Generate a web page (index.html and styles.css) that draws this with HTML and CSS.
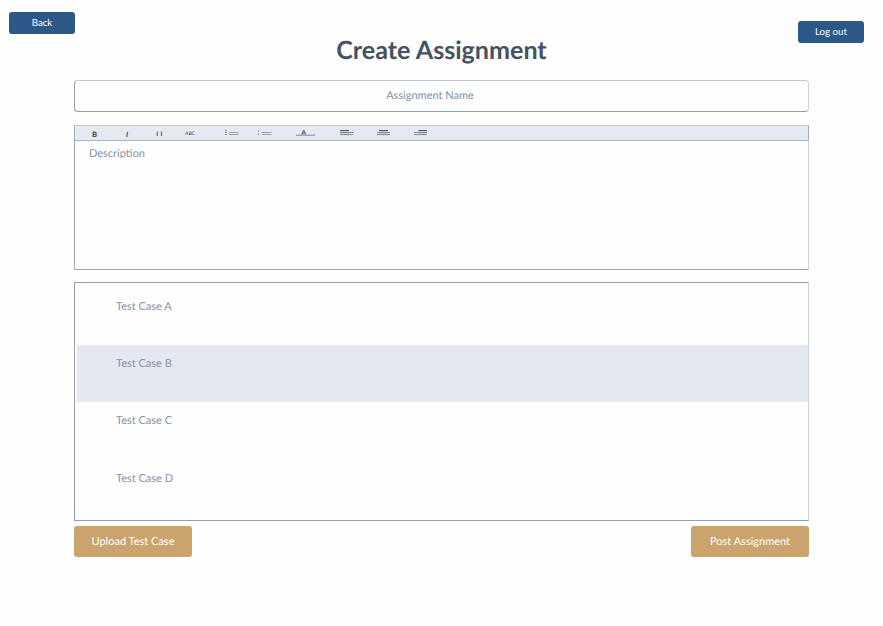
FILE: index.html
```html
<!DOCTYPE html>
<html lang="en">
<head>
<meta charset="utf-8">
<title>Create Assignment</title>
<link rel="stylesheet" href="styles.css">
</head>
<body>
<header class="top">
  <button class="nav-btn back">Back</button>
  <h1>Create Assignment</h1>
  <button class="nav-btn logout">Log out</button>
</header>
<main>
  <div class="name-field"><span>Assignment Name</span></div>
  <section class="editor">
    <div class="toolbar">
      <span class="tool bold">B</span>
      <span class="tool italic">I</span>
      <span class="tool underline">U</span>
      <span class="tool strike">ABC</span>
      <svg class="bullets" width="14" height="6" viewBox="0 0 14 6"><path d="M0 .5h2M0 2.500h2M0 4.500h2" stroke="#7c8493"/><path d="M4 2.500h9.500M4 4.500h9.500" stroke="#9aa2b0"/></svg>
      <svg class="numbers" width="14" height="6" viewBox="0 0 14 6"><path d="M.5 0v2M.5 3v2" stroke="#a4abb8"/><path d="M4 2.500h9.500M4 4.500h9.500" stroke="#9aa2b0"/></svg>
      <svg class="color" width="19" height="6" viewBox="0 0 19 6"><path d="M5.700 4.500 7.700.3l2 4.200M6.300 3.200h2.800" fill="none" stroke="#5d6675" stroke-width="1.100"/><path d="M0 5.200h19" stroke="#8d96a4" stroke-width="1.200"/></svg>
      <svg class="left" width="14" height="6" viewBox="0 0 14 6"><path d="M0 .6h9" stroke="#4f5a69" stroke-width="1.200"/><path d="M0 2.500h13.500M0 4.600h13" stroke="#858e9c"/><path d="M0 3.500h9" stroke="#c2c8d2"/></svg>
      <svg class="center" width="14" height="6" viewBox="0 0 14 6"><path d="M2 .6h9" stroke="#4f5a69" stroke-width="1.200"/><path d="M0 2.500h13M0 4.600h13" stroke="#858e9c"/><path d="M2 3.500h9" stroke="#c2c8d2"/></svg>
      <svg class="right" width="14" height="6" viewBox="0 0 14 6"><path d="M4.500 .6h8.500" stroke="#4f5a69" stroke-width="1.200"/><path d="M0 2.500h13M0 4.600h13" stroke="#858e9c"/><path d="M4.500 3.500h8.500" stroke="#c2c8d2"/></svg>
    </div>
    <div class="description"><span>Description</span></div>
  </section>
  <ul class="cases">
    <li class="case a">Test Case A</li>
    <li class="case b">Test Case B</li>
    <li class="case c">Test Case C</li>
    <li class="case d">Test Case D</li>
  </ul>
  <div class="actions">
    <button class="action upload">Upload Test Case</button>
    <button class="action post">Post Assignment</button>
  </div>
</main>
</body>
</html>
```

FILE: styles.css
```css
* { box-sizing: border-box; }
body {
  margin: 0;
  background: #fefefe;
  font-family: Lato, sans-serif;
  color: #8492a8;
  text-rendering: geometricPrecision;
}
button {
  display: block;
  border: 0;
  padding: 0;
  font-family: inherit;
  color: #fff;
  text-rendering: inherit;
}
.top {
  display: flex;
  justify-content: space-between;
  align-items: flex-start;
  height: 80px;
  padding: 12px 19px 0 9px;
}
.nav-btn {
  width: 66px;
  height: 22px;
  border-radius: 3px;
  background: #2b5887;
  font-size: 9.700px;
  line-height: 22px;
}
.logout { margin-top: 9px; }
h1 {
  margin: 21px 0 0 10px;
  font-size: 25.100px;
  line-height: 34px;
  font-weight: 700;
  color: #465161;
  white-space: nowrap;
}
main { width: 735px; margin-left: 74px; }
.name-field {
  height: 32px;
  border: 1px solid #8f9db2;
  border-top-color: #bdc6d3;
  border-right-color: #cdd3de;
  border-radius: 4px;
  padding-right: 23px;
  text-align: center;
  font-size: 11px;
  line-height: 30px;
}
.editor { margin-top: 13px; }
.toolbar {
  display: flex;
  align-items: flex-start;
  height: 15px;
  padding: 4px 0 0 17px;
  background: #e4e9f2;
  border: 1px solid #a0adc0;
  border-top-color: #c0c8d5;
  border-bottom: 0;
}
.toolbar svg { flex: none; }
.tool {
  font-size: 7px;
  line-height: 10px;
  color: #3f4858;
}
.bold { width: 7px; font-size: 7.500px; font-weight: 900; }
.italic { width: 6px; margin-left: 27px; font-style: italic; font-weight: 900; }
.underline {
  width: 7px;
  height: 6px;
  margin-left: 24px;
  overflow: hidden;
  font-size: 9px;
  line-height: 9px;
}
.strike { width: 12px; margin: 2px 0 0 22px; font-size: 5px; line-height: 5px; }
.bullets { margin-left: 28px; }
.numbers { margin-left: 19px; }
.color { margin-left: 24px; }
.left { margin-left: 25px; }
.center { margin-left: 23px; }
.right { margin-left: 23px; }
.description {
  height: 130px;
  border: 1px solid #98a6ba;
  border-top-color: #a9b4c4;
  border-right-color: #cdd3de;
  padding: 3px 14px;
}
.description span {
  display: block;
  height: 14px;
  overflow: hidden;
  font-size: 11px;
  line-height: 19px;
}
.cases {
  list-style: none;
  margin: 12px 0 0;
  padding: 0 0 0 2px;
  height: 239px;
  border: 1px solid #91a0b7;
  border-right-color: #cdd3de;
}
.case {
  height: 57px;
  padding: 11px 0 0 39px;
  font-size: 11px;
  line-height: 16px;
}
.case.a { height: 62px; padding-top: 16px; }
.case.b { background: #e4e8f1; }
.case.d { padding-top: 12px; }
.actions {
  display: flex;
  justify-content: space-between;
  margin-top: 5px;
}
.action {
  width: 118px;
  height: 31px;
  border-radius: 3px;
  background: #cba36d;
  font-size: 11px;
  line-height: 31px;
}
```
